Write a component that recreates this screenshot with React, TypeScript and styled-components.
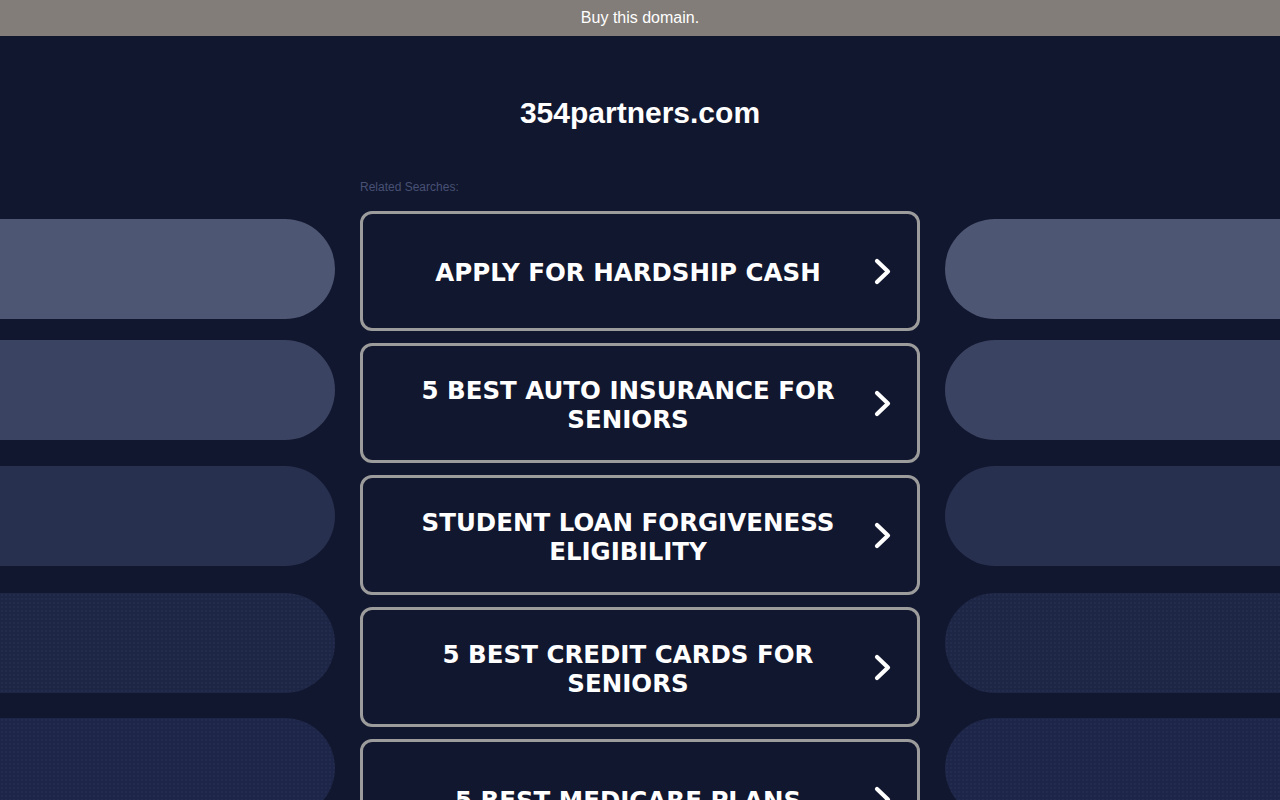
import React from "react";
import styled, { createGlobalStyle } from "styled-components";

const GlobalStyle = createGlobalStyle`
  html, body {
    margin: 0;
    padding: 0;
    background: #11172e;
    overflow: hidden;
  }
  * { box-sizing: border-box; }
`;

const Page = styled.div`
  min-height: 800px;
  background: #11172e;
  font-family: "Liberation Sans", Arial, sans-serif;
`;

const TopBar = styled.div`
  height: 36px;
  background: #827d78;
  color: #ffffff;
  font-size: 16px;
  display: flex;
  align-items: center;
  justify-content: center;
`;

const Title = styled.h1`
  margin: 59px 0 0;
  height: 36px;
  line-height: 36px;
  text-align: center;
  color: #ffffff;
  font-size: 30px;
  font-weight: 700;
`;

const Main = styled.div`
  display: grid;
  grid-template-columns: 335px 560px 335px;
  column-gap: 25px;
  margin-top: 49px;
`;

const PillColumn = styled.div`
  display: flex;
  flex-direction: column;
  padding-top: 39px;
`;

const Pill = styled.div<{ $color: string; $gap: number; $side: "left" | "right"; $dots?: boolean }>`
  height: 100px;
  margin-top: ${(p) => p.$gap}px;
  background-color: ${(p) => p.$color};
  background-image: ${(p) =>
    p.$dots ? "radial-gradient(rgba(90,105,150,0.18) 0.6px, transparent 0.8px)" : "none"};
  background-size: 4px 4px;
  border-radius: ${(p) => (p.$side === "left" ? "0 50px 50px 0" : "50px 0 0 50px")};
`;

const Center = styled.div`
  display: flex;
  flex-direction: column;
`;

const Related = styled.div`
  font-size: 12px;
  line-height: 14px;
  color: #485175;
  margin-bottom: 17px;
`;

const Cards = styled.div`
  display: flex;
  flex-direction: column;
  gap: 12px;
`;

const Card = styled.a`
  height: 120px;
  border: 3px solid #9c9c9c;
  border-radius: 12px;
  display: flex;
  align-items: center;
  padding: 0 26px 0 40px;
  gap: 21px;
  text-decoration: none;
  color: #ffffff;
  cursor: pointer;
`;

const CardText = styled.span`
  flex: 1;
  text-align: center;
  font-family: "DejaVu Sans", Verdana, sans-serif;
  font-weight: 700;
  font-size: 24.5px;
  line-height: 29px;
  padding-top: 3px;
  text-transform: uppercase;
  color: #ffffff;
`;

const Chevron = () => (
  <svg width="17" height="27" viewBox="0 0 17 27" fill="none">
    <polyline
      points="3,3 14,13.5 3,24"
      stroke="#ffffff"
      strokeWidth="4.2"
      strokeLinecap="round"
      strokeLinejoin="round"
    />
  </svg>
);

const pills = [
  { color: "#4d5672", gap: 0 },
  { color: "#3a4361", gap: 21 },
  { color: "#283050", gap: 26 },
  { color: "#1e2646", gap: 27, dots: true },
  { color: "#1d2648", gap: 25, dots: true },
];

const searches = [
  "Apply for Hardship Cash",
  "5 Best Auto Insurance for Seniors",
  "Student Loan Forgiveness Eligibility",
  "5 Best Credit Cards for Seniors",
  "5 Best Medicare Plans",
];

export default function App() {
  return (
    <>
      <GlobalStyle />
      <Page>
        <TopBar>Buy this domain.</TopBar>
        <Title>354partners.com</Title>
        <Main>
          <PillColumn>
            {pills.map((p, i) => (
              <Pill key={i} $color={p.color} $gap={p.gap} $side="left" $dots={p.dots} />
            ))}
          </PillColumn>
          <Center>
            <Related>Related Searches:</Related>
            <Cards>
              {searches.map((s) => (
                <Card key={s}>
                  <CardText>{s}</CardText>
                  <Chevron />
                </Card>
              ))}
            </Cards>
          </Center>
          <PillColumn>
            {pills.map((p, i) => (
              <Pill key={i} $color={p.color} $gap={p.gap} $side="right" $dots={p.dots} />
            ))}
          </PillColumn>
        </Main>
      </Page>
    </>
  );
}
